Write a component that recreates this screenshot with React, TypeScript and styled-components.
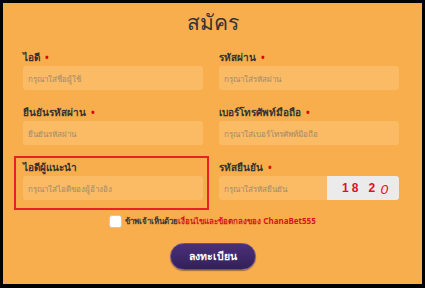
import React from 'react';
import styled, { createGlobalStyle } from 'styled-components';

const GlobalStyle = createGlobalStyle`
  html, body {
    margin: 0;
    padding: 0;
    background: #000;
  }
  body {
    font-family: "Noto Sans", "Liberation Sans", sans-serif;
  }
`;

const Page = styled.div`
  width: 419px;
  height: 281px;
  border-style: solid;
  border-color: #000;
  border-width: 3px 3px 4px 3px;
  background: #f8ae4c;
  overflow: hidden;
`;

const Title = styled.h2`
  margin: 4px 0 11px;
  height: 30px;
  line-height: 30px;
  text-align: center;
  font-size: 21px;
  font-weight: 400;
  color: #333;
`;

const FormGrid = styled.div`
  display: grid;
  grid-template-columns: 180px 180px;
  column-gap: 16px;
  row-gap: 13px;
  padding-left: 20px;
`;

const Field = styled.div<{ $highlight?: boolean }>`
  position: relative;
  display: flex;
  flex-direction: column;

  ${({ $highlight }) => $highlight && `
    &::after {
      content: '';
      position: absolute;
      top: -2px;
      left: -9px;
      right: -6px;
      bottom: -10px;
      border: 2px solid #e8202a;
      pointer-events: none;
    }
  `}
`;

const Label = styled.label`
  height: 18px;
  line-height: 18px;
  font-size: 10px;
  font-weight: 700;
  color: #333;
`;

const Required = styled.span`
  color: #e00000;
  margin-left: 5px;
`;

const InputRow = styled.div`
  display: flex;
  height: 24px;
`;

const Input = styled.input<{ $joined?: boolean }>`
  flex: 1;
  min-width: 0;
  height: 24px;
  box-sizing: border-box;
  border: none;
  outline: none;
  border-radius: ${({ $joined }) => ($joined ? '3px 0 0 3px' : '3px')};
  background: #fbbb64;
  padding: 0 5px;
  font-family: "Noto Sans", "Liberation Sans", sans-serif;
  font-size: 8px;
  color: #333;

  &::placeholder {
    color: #a08a6c;
  }
`;

const Captcha = styled.div`
  width: 72px;
  height: 24px;
  background: #ebebeb;
  border-radius: 0 3px 3px 0;
  display: flex;
  align-items: center;
  padding-left: 15px;
  box-sizing: border-box;
  gap: 3px;
`;

const Digit = styled.span<{ $thin?: boolean; $gap?: number }>`
  font-family: "Liberation Sans", sans-serif;
  font-size: 12px;
  font-weight: ${({ $thin }) => ($thin ? 400 : 700)};
  font-style: ${({ $thin }) => ($thin ? 'italic' : 'normal')};
  color: #e0102a;
  margin-left: ${({ $gap }) => $gap ?? 0}px;
  line-height: 1;
  transform: ${({ $thin }) => ($thin ? 'translateY(2px) scaleX(1.15)' : 'none')};
`;

const AgreeRow = styled.div`
  margin-top: 13px;
  height: 16px;
  display: flex;
  align-items: center;
  justify-content: center;
  gap: 3px;
  font-size: 8px;
  font-weight: 700;
  color: #3a3a3a;
`;

const CheckBox = styled.span`
  width: 13px;
  height: 13px;
  box-sizing: border-box;
  background: #fff;
  border: 1px solid #c9c9c9;
  border-radius: 3px;
`;

const Terms = styled.span`
  color: #d7141f;
`;

const ButtonRow = styled.div`
  margin-top: 14px;
  display: flex;
  justify-content: center;
`;

const SubmitButton = styled.button`
  width: 86px;
  height: 27px;
  border-radius: 14px;
  border: 1px solid #6a4f98;
  background: linear-gradient(#4b3079, #33205a);
  box-shadow: 0 1px 1px rgba(0, 0, 0, 0.35);
  color: #fff;
  font-family: "Noto Sans", "Liberation Sans", sans-serif;
  font-size: 10.5px;
  font-weight: 700;
  cursor: pointer;
`;

const App: React.FC = () => {
  return (
    <Page>
      <GlobalStyle />
      <Title>สมัคร</Title>
      <FormGrid>
        <Field>
          <Label>ไอดี<Required>•</Required></Label>
          <InputRow><Input placeholder="กรุณาใส่ชื่อผู้ใช้" /></InputRow>
        </Field>
        <Field>
          <Label>รหัสผ่าน<Required>•</Required></Label>
          <InputRow><Input type="password" placeholder="กรุณาใส่รหัสผ่าน" /></InputRow>
        </Field>
        <Field>
          <Label>ยืนยันรหัสผ่าน<Required>•</Required></Label>
          <InputRow><Input type="password" placeholder="ยืนยันรหัสผ่าน" /></InputRow>
        </Field>
        <Field>
          <Label>เบอร์โทรศัพท์มือถือ<Required>•</Required></Label>
          <InputRow><Input placeholder="กรุณาใส่เบอร์โทรศัพท์มือถือ" /></InputRow>
        </Field>
        <Field $highlight>
          <Label>ไอดีผู้แนะนำ</Label>
          <InputRow><Input placeholder="กรุณาใส่ไอดีของผู้อ้างอิง" /></InputRow>
        </Field>
        <Field>
          <Label>รหัสยืนยัน<Required>•</Required></Label>
          <InputRow>
            <Input $joined placeholder="กรุณาใส่รหัสยืนยัน" />
            <Captcha>
              <Digit>1</Digit>
              <Digit>8</Digit>
              <Digit $gap={7}>2</Digit>
              <Digit $thin $gap={3}>0</Digit>
            </Captcha>
          </InputRow>
        </Field>
      </FormGrid>
      <AgreeRow>
        <CheckBox />
        <span>ข้าพเจ้าเห็นด้วย<Terms>เงื่อนไขและข้อตกลงของ ChanaBet555</Terms></span>
      </AgreeRow>
      <ButtonRow>
        <SubmitButton>ลงทะเบียน</SubmitButton>
      </ButtonRow>
    </Page>
  );
};

export default App;
